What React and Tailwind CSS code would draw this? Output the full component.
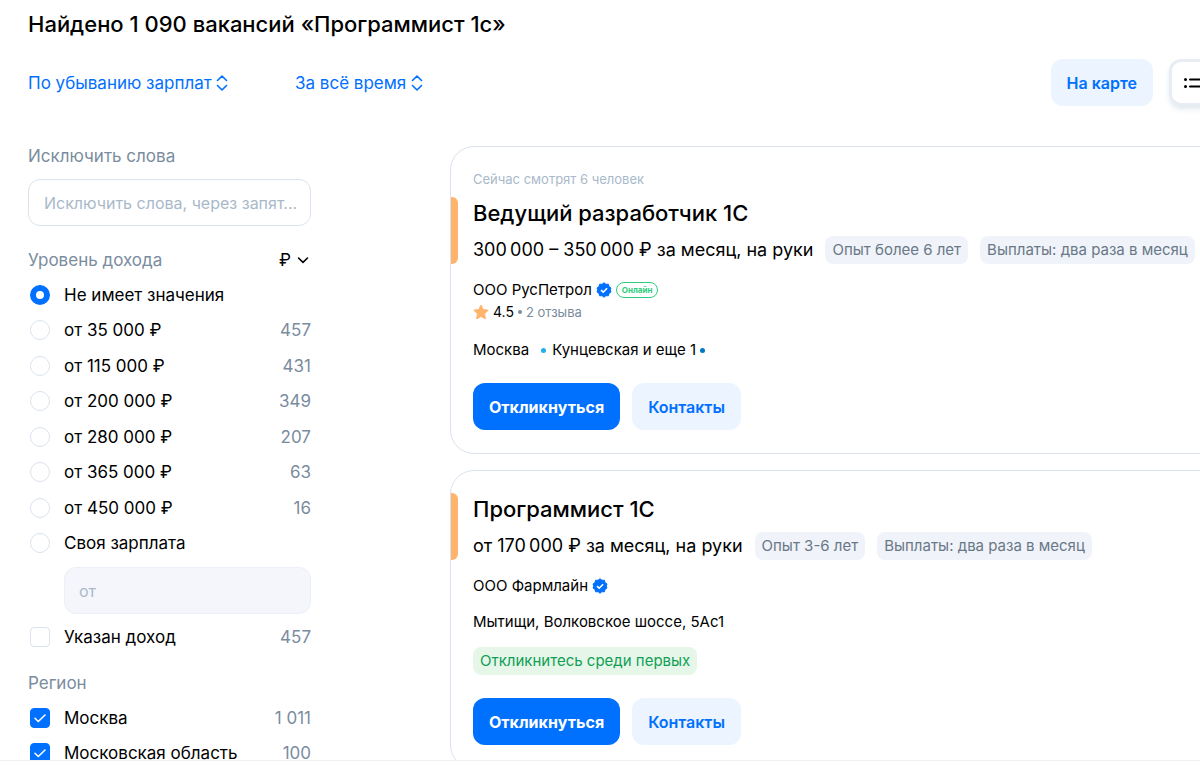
import React, { useState } from 'react';

const incomeOptions = [
  { value: 'any', label: 'Не имеет значения' },
  { value: '35', label: 'от 35 000 ₽', count: '457' },
  { value: '115', label: 'от 115 000 ₽', count: '431' },
  { value: '200', label: 'от 200 000 ₽', count: '349' },
  { value: '280', label: 'от 280 000 ₽', count: '207' },
  { value: '365', label: 'от 365 000 ₽', count: '63' },
  { value: '450', label: 'от 450 000 ₽', count: '16' },
  { value: 'custom', label: 'Своя зарплата' },
];

const regionOptions = [
  { value: 'moscow', label: 'Москва', count: '1 011' },
  { value: 'moscow-region', label: 'Московская область', count: '100' },
];

const vacancies = [
  {
    id: 1,
    watching: 'Сейчас смотрят 6 человек',
    title: 'Ведущий разработчик 1С',
    salary: '300\u2009000 – 350\u2009000 ₽ за месяц, на руки',
    tags: ['Опыт более 6 лет', 'Выплаты: два раза в месяц'],
    company: 'ООО РусПетрол',
    online: true,
    rating: '4.5',
    reviews: '2 отзыва',
    city: 'Москва',
    metro: 'Кунцевская и еще 1',
  },
  {
    id: 2,
    title: 'Программист 1С',
    salary: 'от 170\u2009000 ₽ за месяц, на руки',
    tags: ['Опыт 3-6 лет', 'Выплаты: два раза в месяц'],
    company: 'ООО Фармлайн',
    city: 'Мытищи, Волковское шоссе, 5Ас1',
    hint: 'Откликнитесь среди первых',
  },
];

const SortIcon = () => (
  <svg width="12" height="16" viewBox="0 0 12 16" fill="none" stroke="currentColor" strokeWidth="1.6" strokeLinecap="round" strokeLinejoin="round" aria-hidden="true">
    <path d="M1.5 5.5 6 1l4.5 4.5M1.5 10.5 6 15l4.5-4.5" />
  </svg>
);

const VerifiedIcon = () => (
  <svg width="16" height="16" viewBox="0 0 16 16" aria-hidden="true">
    <path
      fill="#0070ff"
      stroke="#0070ff"
      strokeWidth="1"
      strokeLinejoin="round"
      d="m8 .7 1.9 1.6 2.5-.1.6 2.4 2 1.4-.8 2 .8 2-2 1.4-.6 2.4-2.5-.1L8 15.3l-1.9-1.6-2.5.1-.6-2.4L1 10l.8-2L1 6l2-1.4.6-2.4 2.5.1z"
    />
    <path d="m5 8.1 2.2 2.1 3.9-4" fill="none" stroke="#fff" strokeWidth="1.6" />
  </svg>
);

const StarIcon = () => (
  <svg width="16" height="16" viewBox="0 0 16 16" fill="#ffb36b" stroke="#ffb36b" strokeWidth="1" strokeLinejoin="round" aria-hidden="true">
    <path d="m8 1 2.1 4.5 5.1.7-3.7 3.5.9 5.1L8 12.4l-4.4 2.4.9-5.1L.8 6.2l5.1-.7z" />
  </svg>
);

const SortSelect = ({ label, option }) => (
  <label className="flex w-[251px] items-center gap-1 text-[#0070ff]">
    <select aria-label={label} className="appearance-none bg-transparent text-[17px] leading-6 outline-none">
      <option>{option}</option>
    </select>
    <SortIcon />
  </label>
);

const CheckRow = ({ label, count, checked, onChange }) => (
  <label className="flex items-center text-[17px] leading-6">
    <span className="ml-[2px] mr-[14px] grid size-5 shrink-0">
      <input
        type="checkbox"
        checked={checked}
        onChange={onChange}
        className="col-start-1 row-start-1 size-5 appearance-none rounded-[4px] border border-[#dbe3ee] checked:border-[#0070ff] checked:bg-[#0070ff]"
      />
      {checked && (
        <svg className="pointer-events-none col-start-1 row-start-1" width="20" height="20" viewBox="0 0 20 20" fill="none" stroke="#fff" strokeWidth="1.6" strokeLinecap="round" strokeLinejoin="round" aria-hidden="true">
          <path d="m5 10.3 3.3 3.2L15 7" />
        </svg>
      )}
    </span>
    <span className="flex-1">{label}</span>
    <span className="text-[#7a8c9e]">{count}</span>
  </label>
);

const VacancyCard = ({ vacancy }) => (
  <article className="rounded-3xl border border-[#dbe3ee] pt-[22px] pb-[23px]">
    {vacancy.watching && (
      <p className="mb-2 pl-[22px] text-[13px] leading-5 text-[#a9b9ca]">{vacancy.watching}</p>
    )}
    <div className="flex gap-[15px]">
      <span className="w-[7px] shrink-0 rounded-r-md bg-[#ffb36b]" />
      <div>
        <h2 className="text-[22px] leading-8 font-medium">
          <a href="#vacancy">{vacancy.title}</a>
        </h2>
        <div className="mt-[7px] flex h-7 items-center gap-3 whitespace-nowrap">
          <span className="text-[18px] leading-6">{vacancy.salary}</span>
          {vacancy.tags.map((tag) => (
            <span key={tag} className="rounded-lg bg-[#f0f3f9] px-[7px] text-[15px] leading-7 text-[#697887]">
              {tag}
            </span>
          ))}
        </div>
      </div>
    </div>
    <div className="pl-[22px] text-[15px] leading-5">
      <div className="mt-4 flex items-center gap-1">
        <a href="#company">{vacancy.company}</a>
        <VerifiedIcon />
        {vacancy.online && (
          <span className="rounded-full border border-[#2ecc80] px-[5px] text-[8px] leading-[14px] font-bold text-[#2ecc80]">
            Онлайн
          </span>
        )}
      </div>
      {vacancy.rating && (
        <div className="mt-[2px] flex items-center gap-1 pb-[2px] text-[14px]">
          <StarIcon />
          <span>{vacancy.rating}</span>
          <span className="size-1 rounded-full bg-[#7a8c9e]" />
          <a href="#reviews" className="text-[13px] text-[#7a8c9e]">{vacancy.reviews}</a>
        </div>
      )}
      <div className="mt-4 flex items-center">
        <span>{vacancy.city}</span>
        {vacancy.metro && (
          <>
            <span className="ml-3 mr-[6px] size-[5px] rounded-full bg-[#1fb0e6]" />
            <span>{vacancy.metro}</span>
            <span className="ml-1 size-[5px] rounded-full bg-[#0078bf]" />
          </>
        )}
      </div>
      {vacancy.hint && (
        <p className="mt-[15px] w-fit rounded-lg bg-[#e6f7ea] px-[7px] text-[15px] leading-7 text-[#109e55]">{vacancy.hint}</p>
      )}
      <div className="mt-[23px] flex gap-3 text-[16px]">
        <button type="button" className="h-[47px] rounded-xl bg-[#0070ff] px-4 font-bold text-white">
          Откликнуться
        </button>
        <button type="button" className="h-[47px] rounded-xl bg-[#ebf4ff] px-4 font-semibold text-[#0070ff]">
          Контакты
        </button>
      </div>
    </div>
  </article>
);

const App = () => {
  const [income, setIncome] = useState('any');
  const [onlyWithIncome, setOnlyWithIncome] = useState(false);
  const [regions, setRegions] = useState(['moscow', 'moscow-region']);

  const toggleRegion = (value) => {
    setRegions((prev) => (prev.includes(value) ? prev.filter((item) => item !== value) : [...prev, value]));
  };

  return (
    <div className="flex h-screen flex-col overflow-hidden bg-white font-['Inter','Liberation_Sans',sans-serif] text-black">
      <main className="min-h-0 flex-1 overflow-hidden pl-7">
        <h1 className="pt-2 text-[22px] leading-8 font-medium">Найдено 1 090 вакансий «Программист 1с»</h1>

        <div className="mt-[19px] -mr-4 flex items-center gap-4">
          <SortSelect label="Сортировка" option="По убыванию зарплат" />
          <SortSelect label="Период" option="За всё время" />
          <button type="button" className="ml-auto h-[47px] rounded-xl bg-[#ebf4ff] px-4 text-[16px] font-semibold text-[#0070ff]">
            На карте
          </button>
          <button
            type="button"
            aria-label="Списком"
            className="flex h-[47px] w-[47px] items-center rounded-xl border-[3px] border-[#e8edf4] pl-3 shadow-md shadow-slate-200"
          >
            <svg width="20" height="20" viewBox="0 0 20 20" fill="none" stroke="currentColor" strokeWidth="2" strokeLinecap="round" aria-hidden="true">
              <path d="M1.5 6.5h.01M1.5 13.5h.01" strokeWidth="3" />
              <path d="M6 6.5h13M6 13.5h13" />
            </svg>
          </button>
        </div>

        <div className="mt-10 flex">
          <aside className="w-[283px] shrink-0">
            <label htmlFor="exclude" className="block text-[17px] leading-5 text-[#7a8c9e]">
              Исключить слова
            </label>
            <input
              id="exclude"
              type="text"
              placeholder="Исключить слова, через запят..."
              className="mt-[13px] h-[47px] w-full rounded-xl border border-[#dbe3ee] pl-[15px] text-[16px] outline-none placeholder:text-[#a9b9ca]"
            />

            <fieldset>
              <div className="mt-[22px] flex items-center justify-between text-[17px] leading-6">
                <span id="income-title" className="text-[#7a8c9e]">Уровень дохода</span>
                <label className="flex items-center gap-[6px] pr-[2px]">
                  <select aria-label="Валюта" className="appearance-none bg-transparent outline-none">
                    <option>₽</option>
                  </select>
                  <svg width="12" height="8" viewBox="0 0 12 8" fill="none" stroke="currentColor" strokeWidth="1.6" strokeLinecap="round" strokeLinejoin="round" aria-hidden="true">
                    <path d="m1.5 2 4.5 4.3L10.5 2" />
                  </svg>
                </label>
              </div>
              <div role="radiogroup" aria-labelledby="income-title" className="mt-[5px] grid min-h-[284px] auto-rows-fr">
                {incomeOptions.map((item) => (
                  <label key={item.value} className="flex items-center text-[17px] leading-6">
                    <input
                      type="radio"
                      name="income"
                      checked={income === item.value}
                      onChange={() => setIncome(item.value)}
                      className="ml-[2px] mr-[14px] size-5 shrink-0 appearance-none rounded-full border border-[#dbe3ee] checked:border-[6px] checked:border-[#0070ff]"
                    />
                    <span className="flex-1">{item.label}</span>
                    <span className="text-[#7a8c9e]">{item.count}</span>
                  </label>
                ))}
              </div>
              <div className="mt-[6px] pl-9">
                <input
                  type="text"
                  aria-label="Своя зарплата, от"
                  placeholder="от"
                  disabled={income !== 'custom'}
                  className="block h-[47px] w-full rounded-xl border border-[#ebeff7] bg-[#f4f6fc] pl-[14px] text-[16px] placeholder:text-[#a9b9ca]"
                />
              </div>
              <div className="mt-[11px]">
                <CheckRow
                  label="Указан доход"
                  count="457"
                  checked={onlyWithIncome}
                  onChange={() => setOnlyWithIncome(!onlyWithIncome)}
                />
              </div>
            </fieldset>

            <fieldset>
              <legend className="pt-[22px] text-[17px] leading-6 text-[#7a8c9e]">Регион</legend>
              <div className="mt-[11px] grid gap-[11px]">
                {regionOptions.map((item) => (
                  <CheckRow
                    key={item.value}
                    label={item.label}
                    count={item.count}
                    checked={regions.includes(item.value)}
                    onChange={() => toggleRegion(item.value)}
                  />
                ))}
              </div>
            </fieldset>
          </aside>

          <section className="-mr-8 ml-[139px] grid flex-1 content-start gap-4">
            {vacancies.map((vacancy) => (
              <VacancyCard key={vacancy.id} vacancy={vacancy} />
            ))}
          </section>
        </div>
      </main>
      <footer className="h-[11px] shrink-0 border-t border-[#f0f1f3] bg-white" />
    </div>
  );
};

export default App;
